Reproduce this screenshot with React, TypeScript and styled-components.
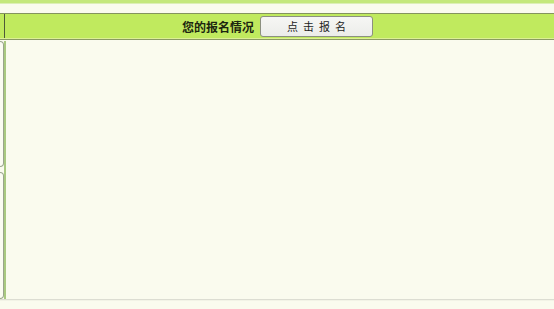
import React from "react";
import styled, { createGlobalStyle } from "styled-components";

const GlobalStyle = createGlobalStyle`
  html, body {
    margin: 0;
    padding: 0;
    background: #fafbee;
    font-family: "Noto Sans CJK SC", "Liberation Sans", sans-serif;
  }
`;

const Page = styled.div`
  width: 554px;
  height: 309px;
  display: flex;
  flex-direction: column;
  overflow: hidden;
`;

const TopStrip = styled.div`
  height: 3px;
  background: #c4e87c;
  border-bottom: 1px solid #dcefb6;
`;

const Spacer = styled.div`
  height: 9px;
`;

const HeaderBar = styled.div`
  height: 24px;
  display: flex;
  background: #c0ea5e;
  border-top: 1px solid #84945e;
  border-bottom: 1px solid #dcef94;
  box-shadow: 0 1px 0 #8a9a62;
`;

const HeaderSide = styled.div`
  width: 4px;
  border-right: 1px solid #4e5a38;
`;

const HeaderCenter = styled.div`
  flex: 1;
  display: flex;
  align-items: center;
  justify-content: center;
  gap: 6px;
  padding-right: 4px;
`;

const Title = styled.span`
  font-size: 12px;
  font-weight: bold;
  color: #1c2610;
`;

const Button = styled.button`
  width: 113px;
  height: 21px;
  padding: 0;
  border: 1px solid #8c9080;
  border-radius: 3px;
  background: linear-gradient(#f6f6f4, #ecedea);
  font-family: "Noto Sans CJK SC", sans-serif;
  font-size: 11px;
  letter-spacing: 5px;
  text-indent: 5px;
  color: #1c1c1c;
`;

const Body = styled.div`
  flex: 1;
  display: flex;
  padding-top: 2px;
`;

const SideColumn = styled.div`
  width: 4px;
  display: flex;
  flex-direction: column;
  gap: 5px;
  border-right: 2px solid #a9c980;
`;

const SideBox = styled.div<{ h: number }>`
  height: ${(p) => p.h}px;
  border: 1px solid #9aa48c;
  border-left: none;
  border-radius: 0 4px 4px 0;
  background: #fbfcf2;
`;

const Main = styled.div`
  flex: 1;
`;

const Footer = styled.div`
  height: 9px;
  border-top: 1px solid #dcddd2;
  box-shadow: inset 0 1px 0 #f2f3e6;
`;

export default function App() {
  return (
    <Page>
      <GlobalStyle />
      <TopStrip />
      <Spacer />
      <HeaderBar>
        <HeaderSide />
        <HeaderCenter>
          <Title>您的报名情况</Title>
          <Button>点击报名</Button>
        </HeaderCenter>
      </HeaderBar>
      <Body>
        <SideColumn>
          <SideBox h={124} />
          <SideBox h={125} />
        </SideColumn>
        <Main />
      </Body>
      <Footer />
    </Page>
  );
}
